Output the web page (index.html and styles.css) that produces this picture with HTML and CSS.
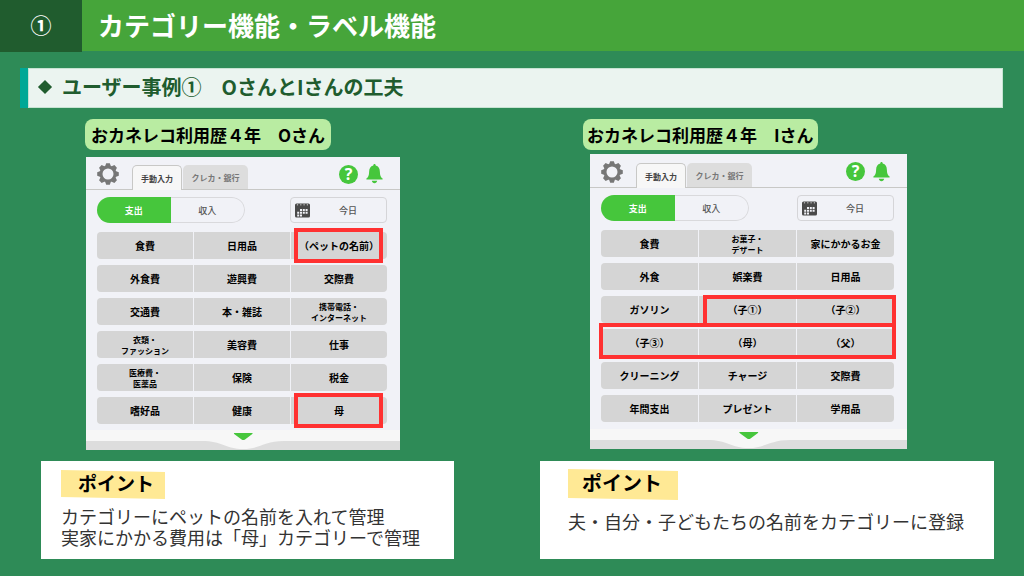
FILE: index.html
```html
<!DOCTYPE html>
<html lang="ja">
<head>
<meta charset="utf-8">
<meta name="viewport" content="width=device-width, initial-scale=1">
<title>カテゴリー機能・ラベル機能</title>
<link rel="stylesheet" href="styles.css">
</head>
<body>
<svg class="defs" aria-hidden="true">
  <symbol id="gear" viewBox="-11 -11 22 22">
    <circle r="7" fill="none" stroke="#777" stroke-width="3"/>
    <g id="teeth" fill="#777">
      <path id="tooth" d="M-3 -7.5L-1.8 -10.8H1.8L3 -7.5Z"/>
      <use href="#tooth" transform="rotate(45)"/>
      <use href="#tooth" transform="rotate(90)"/>
      <use href="#tooth" transform="rotate(135)"/>
      <use href="#tooth" transform="rotate(180)"/>
      <use href="#tooth" transform="rotate(225)"/>
      <use href="#tooth" transform="rotate(270)"/>
      <use href="#tooth" transform="rotate(315)"/>
    </g>
  </symbol>
  <symbol id="bell" viewBox="0 0 17 20">
    <path fill="#46c63c" d="M8.500 0C9.300 0 9.700 .6 9.700 1.600C12.600 2.300 13.800 4.600 13.900 8C14 11.500 14.600 13 16.600 14.600V15.600H.4V14.600C2.400 13 3 11.500 3.100 8C3.200 4.600 4.400 2.300 7.300 1.600C7.300 .6 7.700 0 8.500 0ZM5.800 16.800H11.200C10.900 18.300 9.900 19.200 8.500 19.200S6.100 18.300 5.800 16.800Z"/>
  </symbol>
  <symbol id="calendar" viewBox="0 0 15 15">
    <rect y=".5" width="15" height="14" rx="1.500" fill="#4a4a4a"/>
    <path stroke="#aaa" stroke-width="1.200" d="M2.500 1v1.500M5.800 1v1.500M9.100 1v1.500M12.400 1v1.500"/>
    <path fill="#f1f2f7" d="M5 6h2v2H5zM7.800 6h2v2h-2zM10.600 6h2v2h-2zM2.200 8.700h2v2h-2zM5 8.700h2v2H5zM7.800 8.700h2v2h-2zM10.600 8.700h2v2h-2zM2.200 11.400h2v2h-2zM5 11.400h2v2H5z"/>
  </symbol>
  <symbol id="wave" viewBox="0 0 314 20" preserveAspectRatio="none">
    <path fill="#ddd" d="M0 11H116C136 11 140 19 157 19S178 11 198 11H314V20H0Z"/>
    <path fill="#46c63c" d="M148 3H166.500Q167 3.500 166 4.200L159 9.500Q157.300 10.700 155.600 9.500L148.500 4.200Q147.500 3.500 148 3Z"/>
  </symbol>
</svg>

<header class="header">
  <span class="header-number">①</span>
  <h1 class="header-title">カテゴリー機能・ラベル機能</h1>
</header>

<h2 class="section-title"><span class="diamond"></span>ユーザー事例①　OさんとIさんの工夫</h2>

<main class="cases">
  <section class="case case-o">
    <h3 class="tag">おカネレコ利用歴４年　Oさん</h3>
    <div class="app">
      <div class="app-bar">
        <button class="icon-button" aria-label="設定"><svg class="gear"><use href="#gear"/></svg></button>
        <div class="tabs">
          <button class="tab tab-active">手動入力</button>
          <button class="tab">クレカ・銀行</button>
        </div>
        <button class="help" aria-label="ヘルプ">?</button>
        <button class="icon-button" aria-label="通知"><svg class="bell"><use href="#bell"/></svg></button>
      </div>
      <div class="controls">
        <div class="segment">
          <button class="segment-item segment-active">支出</button>
          <button class="segment-item">収入</button>
        </div>
        <button class="date"><svg class="calendar" aria-hidden="true"><use href="#calendar"/></svg><span class="date-text">今日</span></button>
      </div>
      <div class="rows">
        <div class="row"><button class="cell">食費</button><button class="cell">日用品</button><button class="cell">（ペットの名前）</button><span class="mark mark-third"></span></div>
        <div class="row"><button class="cell">外食費</button><button class="cell">遊興費</button><button class="cell">交際費</button></div>
        <div class="row"><button class="cell">交通費</button><button class="cell">本・雑誌</button><button class="cell cell-small">携帯電話・<br>インターネット</button></div>
        <div class="row"><button class="cell cell-small">衣類・<br>ファッション</button><button class="cell">美容費</button><button class="cell">仕事</button></div>
        <div class="row"><button class="cell cell-small">医療費・<br>医薬品</button><button class="cell">保険</button><button class="cell">税金</button></div>
        <div class="row"><button class="cell">嗜好品</button><button class="cell">健康</button><button class="cell">母</button><span class="mark mark-third"></span></div>
      </div>
      <svg class="wave" aria-hidden="true"><use href="#wave"/></svg>
    </div>
    <div class="point">
      <h4 class="point-title">ポイント</h4>
      <p class="point-text">カテゴリーにペットの名前を入れて管理<br>実家にかかる費用は「母」カテゴリーで管理</p>
    </div>
  </section>

  <section class="case case-i">
    <h3 class="tag">おカネレコ利用歴４年　Iさん</h3>
    <div class="app">
      <div class="app-bar">
        <button class="icon-button" aria-label="設定"><svg class="gear"><use href="#gear"/></svg></button>
        <div class="tabs">
          <button class="tab tab-active">手動入力</button>
          <button class="tab">クレカ・銀行</button>
        </div>
        <button class="help" aria-label="ヘルプ">?</button>
        <button class="icon-button" aria-label="通知"><svg class="bell"><use href="#bell"/></svg></button>
      </div>
      <div class="controls">
        <div class="segment">
          <button class="segment-item segment-active">支出</button>
          <button class="segment-item">収入</button>
        </div>
        <button class="date"><svg class="calendar" aria-hidden="true"><use href="#calendar"/></svg><span class="date-text">今日</span></button>
      </div>
      <div class="rows">
        <div class="row"><button class="cell">食費</button><button class="cell cell-small">お菓子・<br>デザート</button><button class="cell">家にかかるお金</button></div>
        <div class="row"><button class="cell">外食</button><button class="cell">娯楽費</button><button class="cell">日用品</button></div>
        <div class="row"><button class="cell">ガソリン</button><button class="cell">（子①）</button><button class="cell">（子②）</button><span class="mark mark-pair"></span></div>
        <div class="row"><button class="cell">（子③）</button><button class="cell">（母）</button><button class="cell">（父）</button><span class="mark mark-row"></span></div>
        <div class="row"><button class="cell">クリーニング</button><button class="cell">チャージ</button><button class="cell">交際費</button></div>
        <div class="row"><button class="cell">年間支出</button><button class="cell">プレゼント</button><button class="cell">学用品</button></div>
      </div>
      <svg class="wave" aria-hidden="true"><use href="#wave"/></svg>
    </div>
    <div class="point">
      <h4 class="point-title">ポイント</h4>
      <p class="point-text">夫・自分・子どもたちの名前をカテゴリーに登録</p>
    </div>
  </section>
</main>
</body>
</html>
```

FILE: styles.css
```css
* {
  box-sizing: border-box;
}

body {
  margin: 0;
  min-height: 100vh;
  background: #2e8b57;
  color: #000;
  font-family: "Noto Sans CJK JP", sans-serif;
}

h1, h2, h3, h4, p {
  margin: 0;
}

button {
  margin: 0;
  padding: 0;
  border: 0;
  background: none;
  color: inherit;
  font: inherit;
}

svg {
  display: block;
}

.defs {
  position: absolute;
  width: 0;
  height: 0;
}

.header {
  display: flex;
  height: 52px;
  color: #fff;
}

.header-number {
  display: grid;
  place-items: center;
  width: 82px;
  padding-bottom: 4px;
  background: #205c2e;
  font-size: 21px;
  font-weight: 700;
  line-height: 32px;
}

.header-title {
  flex: 1;
  margin-bottom: 1px;
  padding-left: 16px;
  background: #46a53a;
  font-size: 26px;
  line-height: 50px;
}

.section-title {
  display: flex;
  align-items: center;
  gap: 12px;
  height: 40px;
  margin: 16px 21px 0 20px;
  padding: 0 0 2px 12px;
  border-left: 8px solid #00a896;
  background: #ebf4f0;
  box-shadow: inset 0 0 0 1px #c6e3d2;
  color: #205c2e;
  font-size: 20px;
  line-height: 36px;
}

.diamond {
  width: 10px;
  height: 10px;
  transform: rotate(45deg);
  background: #205c2e;
}

.cases {
  display: grid;
  grid-template-columns: 413fr 454fr;
  gap: 86px;
  padding: 11px 30px 16px 41px;
}

.case {
  display: flex;
  flex-direction: column;
}

.tag {
  align-self: flex-start;
  padding: 0 6px;
  border-radius: 8px;
  background: #b9eca2;
  font-size: 17px;
  line-height: 31px;
  white-space: nowrap;
}

.case-o .tag {
  margin-left: 44px;
}

.case-i .tag {
  margin-left: 43px;
  padding: 0 4px;
}

.app {
  background: #f1f2f7;
}

.case-o .app {
  margin: 7px 54px 11px 45px;
}

.case-i .app {
  margin: 4px 87px 12px 50px;
}

.app-bar {
  display: flex;
  align-items: center;
  height: 33px;
  padding: 2px 17px 0 11px;
  border-bottom: 1px solid #c8c8c6;
}

.gear {
  width: 22px;
  height: 22px;
}

.tabs {
  display: flex;
  align-self: flex-end;
  gap: 1px;
  margin: 0 auto -1px 13px;
}

.tab {
  width: 65px;
  height: 25px;
  border-radius: 5px 5px 0 0;
  background: #ddd;
  color: #777;
  font-size: 8px;
  font-weight: 700;
  border-bottom: 1px solid #c8c8c6;
}

.tab-active {
  width: 50px;
  border: 1px solid #c8c8c6;
  border-bottom: 0;
  background: #f7f7f7;
  color: #444;
}

.help {
  width: 19px;
  height: 19px;
  margin-right: 8px;
  border-radius: 50%;
  background: #46c63c;
  color: #fff;
  font-family: "Open Sans", sans-serif;
  font-size: 16px;
  font-weight: 700;
  line-height: 19px;
}

.bell {
  width: 17px;
  height: 20px;
}

.controls {
  display: flex;
  justify-content: space-between;
  padding: 7px 13px 9px 11px;
}

.segment {
  display: flex;
  overflow: hidden;
  width: 148px;
  height: 26px;
  border-radius: 13px;
}

.segment-item {
  flex: 1;
  border: 1px solid #d9d9dc;
  border-left: 0;
  border-radius: 0 13px 13px 0;
  color: #555;
  font-size: 9px;
  font-weight: 500;
}

.segment-active {
  border: 0;
  border-radius: 0;
  background: #46c63c;
  color: #fff;
  font-weight: 700;
}

.date {
  display: flex;
  align-items: center;
  width: 97px;
  height: 26px;
  padding: 0 0 0 4px;
  border: 1px solid #d5d5d8;
  border-radius: 4px;
  color: #555;
  font-size: 9px;
  font-weight: 500;
}

.calendar {
  width: 15px;
  height: 15px;
}

.date-text {
  flex: 1;
}

.rows {
  display: grid;
  gap: 6px;
  padding: 0 13px 6px 11px;
}

.row {
  position: relative;
  display: grid;
  grid-template-columns: repeat(3, 1fr);
  gap: 1px;
  height: 27px;
}

.cell {
  background: #d5d5d5;
  font-size: 10px;
  font-weight: 700;
  line-height: 11px;
  white-space: nowrap;
}

.cell:first-child {
  border-radius: 4px 0 0 4px;
}

.cell:nth-child(3) {
  border-radius: 0 4px 4px 0;
}

.cell-small {
  font-size: 8px;
}

.mark {
  position: absolute;
  z-index: 1;
  border: 4px solid #ff3131;
  pointer-events: none;
}

.mark-third {
  inset: -4px 4px -4px calc(200% / 3 + 4px);
}

.mark-pair {
  inset: -1px -2px -4px calc(100% / 3 + 4px);
}

.mark-row {
  inset: -6px -2px -3px -2px;
}

.wave {
  width: 100%;
  height: 20px;
  background: #f7f7f7;
}

.case-i .app-bar {
  height: 34px;
}

.case-i .rows {
  padding-bottom: 7px;
}

.point {
  min-height: 98px;
  padding: 9px 20px;
  background: #fff;
}

.case-i .point {
  padding: 8px 28px;
}

.point-title {
  width: 104px;
  padding: 0 0 4px 17px;
  background: #ffe995;
  clip-path: polygon(0 0, 100% 2px, 100% 100%, 0 calc(100% - 2px));
  font-size: 19px;
  line-height: 25px;
}

.case-i .point-title {
  width: 110px;
  padding-left: 14px;
  font-size: 20px;
  line-height: 27px;
}

.point-text {
  padding-top: 7px;
  color: #333;
  font-size: 18px;
  line-height: 21px;
}

.case-i .point-text {
  padding-top: 11px;
}
```
